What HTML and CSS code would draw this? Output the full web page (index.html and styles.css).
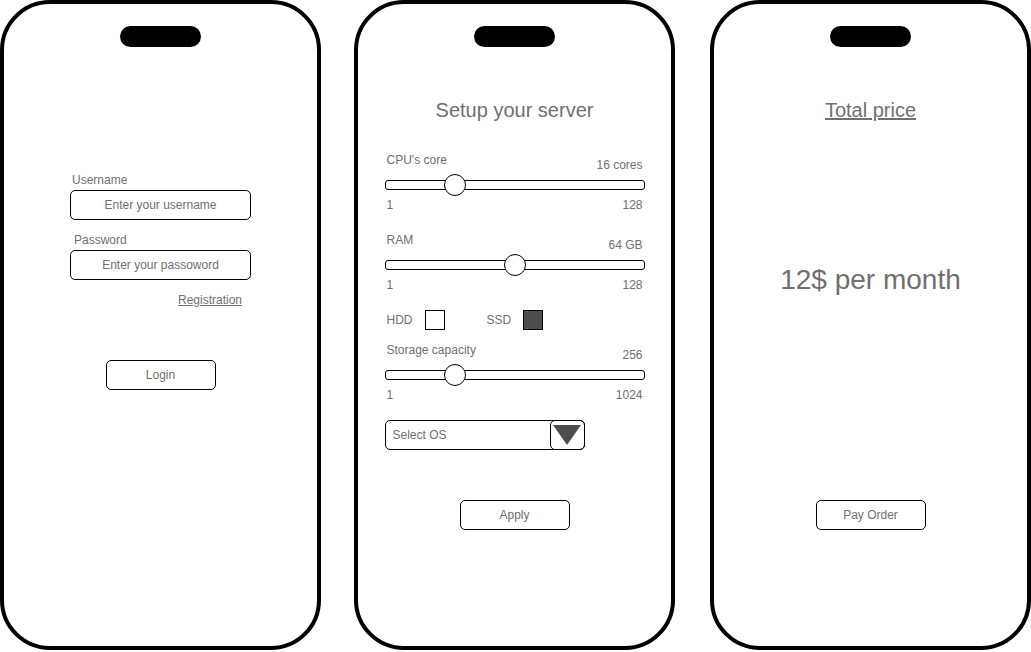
FILE: index.html
```html
<!DOCTYPE html>
<html lang="en">
<head>
  <meta charset="UTF-8" />
  <meta name="viewport" content="width=device-width, initial-scale=1.0"/>
  <title>Server Setup - Mockups</title>
  <link rel="stylesheet" href="styles.css">
</head>
<body>
  <!-- Login screen -->
  <div class="phone">
    <div class="notch"></div>
    <form class="login-form">
      <label class="field-label">Username</label>
      <div class="input">Enter your username</div>
      <label class="field-label field-label-pw">Password</label>
      <div class="input">Enter your passoword</div>
      <a class="register-link">Registration</a>
    </form>
    <div class="btn login-btn">Login</div>
  </div>

  <!-- Server setup screen -->
  <div class="phone phone-setup">
    <div class="notch"></div>
    <h1 class="title">Setup your server</h1>
    <div class="settings">
      <div class="slider-group">
        <div class="slider-head">
          <span>CPU's core</span>
          <span class="slider-value">16 cores</span>
        </div>
        <div class="track"><div class="thumb" style="left: 27%"></div></div>
        <div class="slider-range"><span>1</span><span>128</span></div>
      </div>

      <div class="slider-group">
        <div class="slider-head">
          <span>RAM</span>
          <span class="slider-value">64 GB</span>
        </div>
        <div class="track"><div class="thumb" style="left: 50%"></div></div>
        <div class="slider-range"><span>1</span><span>128</span></div>
      </div>

      <div class="disk-row">
        <span>HDD</span>
        <div class="checkbox"></div>
        <span class="disk-ssd">SSD</span>
        <div class="checkbox checked"></div>
      </div>

      <div class="slider-group slider-storage">
        <div class="slider-head">
          <span>Storage capacity</span>
          <span class="slider-value">256</span>
        </div>
        <div class="track"><div class="thumb" style="left: 27%"></div></div>
        <div class="slider-range"><span>1</span><span>1024</span></div>
      </div>

      <div class="select">
        <span class="select-text">Select OS</span>
        <div class="select-arrow"><div class="triangle"></div></div>
      </div>
    </div>
    <div class="btn apply-btn">Apply</div>
  </div>

  <!-- Price screen -->
  <div class="phone">
    <div class="notch"></div>
    <h1 class="title title-link">Total price</h1>
    <div class="price">12$ per month</div>
    <div class="btn pay-btn">Pay Order</div>
  </div>
</body>
</html>
```

FILE: styles.css
```css
body {
  font-family: 'Liberation Sans', Arial, sans-serif;
  color: #707070;
  margin: 0;
  width: 1031px;
  height: 652px;
  display: flex;
  justify-content: space-between;
  align-items: flex-start;
  background: #fff;
}
.phone {
  width: 321px;
  height: 650px;
  box-sizing: border-box;
  border: 4px solid #000;
  border-radius: 50px;
  display: flex;
  flex-direction: column;
  align-items: center;
}
.phone-setup {
  margin-right: 2px;
}
.notch {
  width: 81px;
  height: 21px;
  margin-top: 22px;
  border-radius: 11px;
  background: #000;
}
.login-form {
  width: 181px;
  margin-top: 126px;
  display: flex;
  flex-direction: column;
}
.field-label {
  font-size: 12px;
  line-height: 14px;
  padding-left: 2px;
  margin-bottom: 3px;
}
.field-label-pw {
  padding-left: 4px;
  margin-top: 13px;
}
.input {
  height: 30px;
  box-sizing: border-box;
  border: 1px solid #000;
  border-radius: 5px;
  font-size: 12px;
  display: flex;
  align-items: center;
  justify-content: center;
}
.register-link {
  align-self: flex-end;
  margin-top: 13px;
  margin-right: 9px;
  font-size: 12px;
  line-height: 14px;
  text-decoration: underline;
}
.btn {
  width: 110px;
  height: 30px;
  box-sizing: border-box;
  border: 1px solid #000;
  border-radius: 5px;
  font-size: 12px;
  display: flex;
  align-items: center;
  justify-content: center;
}
.login-btn {
  margin-top: 53px;
}
.title {
  font-size: 20px;
  line-height: 24px;
  font-weight: normal;
  margin: 51px 0 0;
}
.title-link {
  text-decoration: underline;
}
.settings {
  width: 260px;
  margin-top: 31px;
  display: flex;
  flex-direction: column;
  font-size: 12px;
  line-height: 14px;
}
.slider-group + .slider-group {
  margin-top: 21px;
}
.slider-head,
.slider-range {
  display: flex;
  justify-content: space-between;
  padding: 0 2px;
}
.slider-value {
  margin-top: 5px;
}
.track {
  position: relative;
  height: 10px;
  box-sizing: border-box;
  border: 1px solid #000;
  border-radius: 3px;
  margin-top: 8px;
}
.thumb {
  position: absolute;
  top: 50%;
  width: 22px;
  height: 22px;
  box-sizing: border-box;
  border: 1px solid #000;
  border-radius: 50%;
  background: #fff;
  transform: translate(-50%, -50%);
}
.slider-range {
  margin-top: 8px;
}
.disk-row {
  display: flex;
  align-items: center;
  margin-top: 18px;
  padding-left: 2px;
}
.checkbox {
  width: 20px;
  height: 20px;
  box-sizing: border-box;
  border: 1px solid #000;
  margin-left: 12px;
}
.checkbox.checked {
  background: #4d4d4d;
}
.disk-ssd {
  margin-left: 42px;
}
.slider-storage {
  margin-top: 13px;
}
.select {
  width: 200px;
  height: 30px;
  box-sizing: border-box;
  border: 1px solid #000;
  border-radius: 5px;
  margin-top: 18px;
  display: flex;
  align-items: stretch;
}
.select-text {
  flex: 1;
  display: flex;
  align-items: center;
  padding-left: 7px;
}
.select-arrow {
  width: 35px;
  margin: -1px -1px -1px 0;
  box-sizing: border-box;
  border: 1px solid #000;
  border-radius: 5px;
  display: flex;
  align-items: center;
  justify-content: center;
}
.triangle {
  width: 0;
  height: 0;
  border-left: 14px solid transparent;
  border-right: 14px solid transparent;
  border-top: 20px solid #4d4d4d;
}
.apply-btn {
  margin-top: 50px;
}
.price {
  font-size: 28px;
  line-height: 32px;
  margin-top: 142px;
}
.pay-btn {
  margin-top: 204px;
}
```
